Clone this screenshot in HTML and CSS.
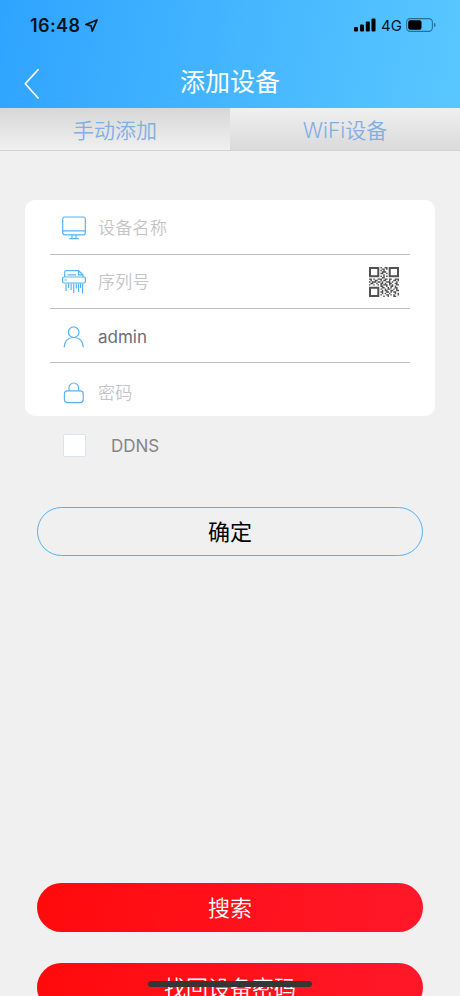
FILE: index.html
```html
<!DOCTYPE html>
<html lang="zh-CN">
<head>
    <meta charset="UTF-8">
    <meta name="viewport" content="width=device-width, initial-scale=1.0">
    <title>添加设备</title>
    <link rel="stylesheet" href="styles.css">
</head>
<body>
    <header>
        <div class="status">
            <span class="time">16:48</span>
            <svg class="location" width="13" height="13" viewBox="0 0 13 13">
                <path d="M12 1L0.9 5.5L6.1 6.9L7.3 12Z" fill="none" stroke="#06131d" stroke-width="1.8" stroke-linejoin="round"/>
            </svg>
            <svg class="signal" width="22" height="14" viewBox="0 0 22 14">
                <rect x="0" y="9" width="4" height="4.5" rx="1"/>
                <rect x="6" y="6.5" width="4" height="7" rx="1"/>
                <rect x="11.8" y="3.5" width="4" height="10" rx="1"/>
                <rect x="17.5" y="0.5" width="4" height="13" rx="1"/>
            </svg>
            <span class="network">4G</span>
            <svg class="battery" width="31" height="14" viewBox="0 0 31 14">
                <rect x="0.6" y="0.6" width="25.8" height="12.8" rx="3.6" fill="none" stroke="#267199" stroke-width="1.1"/>
                <rect x="2.2" y="2.3" width="13.3" height="9.4" rx="2"/>
                <path d="M28 4.8q1.6.6 1.6 2.2t-1.6 2.2z" fill="#267199"/>
            </svg>
        </div>
        <div class="navbar">
            <svg class="back" width="16" height="32" viewBox="0 0 16 32">
                <path d="M14.5 1.3L1.3 15.8L14.5 30.5" fill="none" stroke="#fff" stroke-width="1.7"/>
            </svg>
            <h1>添加设备</h1>
        </div>
    </header>

    <nav class="tabs">
        <div class="tab active">手动添加</div>
        <div class="tab">WiFi设备</div>
    </nav>

    <main>
        <div class="card">
            <div class="row">
                <svg class="icon" width="24" height="24" viewBox="0 0 24 24">
                    <rect x="0.7" y="1" width="22.6" height="17.8" rx="2"/>
                    <path d="M0.7 14.9H23.3M10 18.8V22.5M14 18.8V22.5M7.3 22.7H16.7"/>
                </svg>
                <span class="placeholder">设备名称</span>
            </div>
            <div class="row">
                <svg class="icon" width="24" height="24" viewBox="0 0 24 24">
                    <path d="M2.7 7V2.2Q2.7.7 4.2.7H16.5L21 4.8V7M16.5.7V4.8H21M5.5 4.9H14"/>
                    <rect x="0.6" y="7" width="22.8" height="6" rx="1.5"/>
                    <path d="M2.5 10H5M4 13.5V21M6.6 13.5V18M9.1 13.5V20M11.7 13.5V23M14.3 13.5V18.5M16.6 13.5V22M18.6 13.5V18M20.6 13.5V23.5"/>
                </svg>
                <span class="placeholder">序列号</span>
                <svg class="qr" width="30" height="30" viewBox="0 0 21 21">
                    <path stroke-width="1.4" d="M.7.7h5.8v5.8h-5.8zM14.5.7h5.8v5.8h-5.8zM.7 14.5h5.8v5.8h-5.8z"/>
                    <path d="M8 .5h1m2 0h2M9 1.5h2m1 0h1M8 2.5h1m1 0h1M9 3.5h3M8 4.5h2m2 0h1M10 5.5h1M8 6.5h1m1 0h1m1 0h1M9 7.5h2
                        M0 8.5h2m1 0h1m2 0h3m2 0h2m1 0h2m2 0h3M1 9.5h1m2 0h2m2 0h1m1 0h2m2 0h1m2 0h2m1 0h1
                        M0 10.5h1m1 0h3m1 0h2m1 0h1m2 0h3m1 0h1m2 0h1M1 11.5h2m2 0h1m2 0h2m1 0h1m2 0h2m2 0h2
                        M0 12.5h1m2 0h1m2 0h1m1 0h1m1 0h3m1 0h1m1 0h1m2 0h2
                        M8 13.5h2m2 0h1m2 0h2m1 0h1M9 14.5h2m2 0h1m1 0h1m2 0h2M8 15.5h1m2 0h1m1 0h2m2 0h1m1 0h1
                        M9 16.5h1m1 0h2m2 0h2m2 0h2M8 17.5h2m2 0h2m1 0h1m1 0h2M9 18.5h1m1 0h1m2 0h1m3 0h1m1 0h1
                        M8 19.5h1m3 0h2m1 0h1m1 0h1m2 0h1M10 20.5h1m2 0h1m3 0h2"/>
                </svg>
            </div>
            <div class="row">
                <svg class="icon" width="24" height="24" viewBox="0 0 24 24">
                    <circle cx="11.7" cy="8.2" r="5.3"/>
                    <path d="M2.2 23.2Q2.8 13.5 11.7 13.5T21.3 23.2"/>
                </svg>
                <span class="value">admin</span>
            </div>
            <div class="row">
                <svg class="icon" width="24" height="24" viewBox="0 0 24 24">
                    <rect x="2.4" y="9.8" width="18.8" height="11.8" rx="3"/>
                    <path d="M7 9.8V6.8a4.8 4.8 0 0 1 9.6 0V9.8"/>
                </svg>
                <span class="placeholder">密码</span>
            </div>
        </div>

        <div class="ddns">
            <span class="checkbox"></span>
            <span>DDNS</span>
        </div>

        <button class="confirm">确定</button>

        <div class="bottom">
            <button class="red">搜索</button>
            <button class="red">找回设备密码</button>
        </div>
    </main>
    <div class="home-bar"></div>
</body>
</html>
```
FILE: styles.css
```css
*{
    box-sizing: border-box;
}
body{
    margin: 0;
    height: 996px;
    overflow: hidden;
    display: flex;
    flex-direction: column;
    background: #f0f0f0;
    font-family: Inter, "Noto Sans CJK SC", sans-serif;
}
header{
    height: 108px;
    flex: none;
    background: linear-gradient(100deg, #2fa4ff, #59c7ff);
}
.status{
    display: flex;
    align-items: center;
    height: 50px;
    padding: 0 23px 0 30px;
    color: #06131d;
}
.time{
    font-size: 18px;
    font-weight: 600;
    letter-spacing: 0.4px;
    width: 50px;
    white-space: nowrap;
}
.location{
    margin-left: 5px;
}
.signal{
    margin-left: auto;
}
.network{
    font-size: 15px;
    width: 20px;
    margin: 0 5px 0 5px;
}
.navbar{
    display: grid;
    grid-template-columns: 60px 1fr 60px;
    align-items: center;
    height: 58px;
}
.back{
    margin: 10px 0 0 24px;
}
h1{
    margin: 6px 0 0;
    color: #fff;
    font-size: 25px;
    font-weight: 400;
    line-height: 36px;
    text-align: center;
}
.tabs{
    display: flex;
    flex: none;
    height: 43px;
    border-bottom: 1px solid #d3d3d3;
}
.tab{
    flex: 1;
    color: #81aee5;
    font-size: 21px;
    font-weight: 350;
    line-height: 45px;
    text-align: center;
    background: linear-gradient(#f0f0f0, #dadada);
}
.tab.active{
    background: linear-gradient(#d7d7d7, #f0f0f0);
}
main{
    flex: 1;
    display: flex;
    flex-direction: column;
    padding: 49px 25px 0;
}
.card{
    flex: none;
    height: 216px;
    padding: 0 25px;
    background: #fff;
    border-radius: 10px;
}
.row{
    display: flex;
    align-items: center;
    height: 54px;
    padding: 1px 11px 0 12px;
    border-bottom: 1px solid #bdbdc1;
    font-size: 17px;
}
.row:first-child{
    height: 55px;
}
.row:last-child{
    height: 53px;
    padding-top: 6px;
    border-bottom: none;
}
.icon{
    margin-right: 12px;
    fill: none;
    stroke: #55b4f8;
    stroke-width: 1.2;
}
.placeholder{
    margin-bottom: 3px;
    color: #c4c4c6;
    font-weight: 350;
    letter-spacing: 0.3px;
}
.value{
    margin-top: 2px;
    color: #6d6b7b;
}
.qr{
    margin-left: auto;
    fill: none;
    stroke: #505050;
    stroke-width: 1;
}
.ddns{
    display: flex;
    align-items: center;
    gap: 25px;
    height: 23px;
    margin: 18px 0 0 38px;
    color: #858585;
    font-size: 17px;
}
.checkbox{
    width: 23px;
    height: 23px;
    background: #fff;
    border: 1px solid #dce3ea;
    border-radius: 2px;
}
button{
    flex: none;
    height: 49px;
    margin: 0 12px;
    padding: 0 0 4px;
    border: none;
    border-radius: 25px;
    font-family: inherit;
    font-size: 22px;
}
.confirm{
    margin-top: 50px;
    color: #000;
    background: transparent;
    border: 1.5px solid #4fb2fa;
}
.bottom{
    display: flex;
    flex-direction: column;
    gap: 31px;
    margin-top: 327px;
}
.red{
    color: #fff;
    font-weight: 350;
    background: linear-gradient(100deg, #ff0a0c, #ff1829);
}
.home-bar{
    position: absolute;
    left: 148px;
    top: 981px;
    width: 164px;
    height: 6px;
    border-radius: 3px;
    background: #383536;
}
```
